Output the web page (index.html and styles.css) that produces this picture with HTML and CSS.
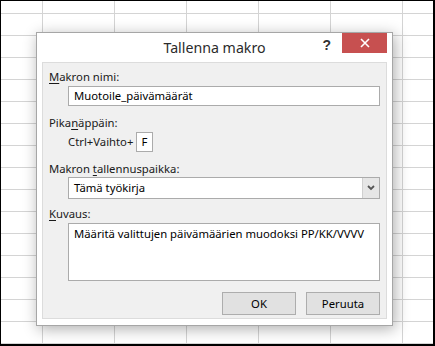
FILE: index.html
```html
<!DOCTYPE html>
<html lang="fi">
<head>
  <meta charset="UTF-8">
  <title>Tallenna makro</title>
  <link rel="stylesheet" href="styles.css">
</head>
<body>
  <div class="sheet">
    <div class="dialog">
      <div class="title-bar">
        <span></span>
        <h1 class="title">Tallenna makro</h1>
        <div class="controls">
          <span class="help">?</span>
          <button type="button" class="btn-close">
            <svg width="10" height="10" viewBox="0 0 10 10"><path d="M1 1 L9 9 M9 1 L1 9" stroke="#fff" stroke-width="1.6"/></svg>
          </button>
        </div>
      </div>
      <div class="panel">
        <label class="lab"><u>M</u>akron nimi:</label>
        <div class="field name-field">Muotoile_päivämäärät</div>

        <label class="lab lab-gap">Pika<u>n</u>äppäin:</label>
        <div class="key-row">
          <span class="key-txt">Ctrl+Vaihto+</span>
          <span class="key-box">F</span>
        </div>

        <label class="lab lab-gap">Makron <u>t</u>allennuspaikka:</label>
        <div class="field select-field">
          <span class="select-txt">Tämä työkirja</span>
          <span class="select-arrow">
            <svg width="8" height="6" viewBox="0 0 8 6"><path d="M1 1 L4 4 L7 1" fill="none" stroke="#555" stroke-width="1.8"/></svg>
          </span>
        </div>

        <label class="lab lab-gap2"><u>K</u>uvaus:</label>
        <div class="field desc-field">Määritä valittujen päivämäärien muodoksi PP/KK/VVVV</div>

        <div class="btn-row">
          <button type="button" class="btn-g">OK</button>
          <button type="button" class="btn-g">Peruuta</button>
        </div>
      </div>
    </div>
  </div>
</body>
</html>
```

FILE: styles.css
```css
/* reset */
* {
  margin: 0;
  padding: 0;
  box-sizing: border-box;
}
html, body {
  width: 435px;
  height: 346px;
  overflow: hidden;
}
body {
  font-family: "Noto Sans", "Open Sans", sans-serif;
  font-size: 11.3px;
  color: #1a1a1a;
}

/* spreadsheet behind the dialog */
.sheet {
  width: 435px;
  height: 346px;
  border-style: solid;
  border-color: #000;
  border-width: 1px 2px 2px 1px;
  background-color: #fff;
  background-image:
    linear-gradient(to right, transparent 71px, #d4d4d4 71px),
    linear-gradient(to bottom, transparent 21px, #d4d4d4 21px);
  background-size: 72px 100%, 100% 22px;
  background-position: -30px 0, 0 -9px;
  padding: 31px 0 0 35px;
}

/* dialog window */
.dialog {
  width: 357px;
  height: 294px;
  background: #fff;
  border: 1px solid #a6a6a6;
  box-shadow: 2px 3px 14px rgba(0,0,0,0.32);
  padding: 0 5px 6px;
  display: flex;
  flex-direction: column;
}
.title-bar {
  height: 29px;
  display: grid;
  grid-template-columns: 1fr auto 1fr;
  align-items: start;
}
.title {
  font-family: "Noto Sans", "Open Sans", sans-serif;
  font-weight: normal;
  font-size: 14.2px;
  color: #2b2b2b;
  line-height: 20px;
  padding-top: 5px;
}
.controls {
  display: flex;
  justify-content: flex-end;
  align-items: flex-start;
}
.help {
  font-family: "Liberation Sans", sans-serif;
  font-weight: bold;
  font-size: 14px;
  color: #333;
  line-height: 14px;
  margin: 5px 11px 0 0;
}
.btn-close {
  width: 45px;
  height: 20px;
  background: #c75050;
  border: 0;
  display: flex;
  align-items: center;
  justify-content: center;
}

/* grey content panel */
.panel {
  flex: 1;
  background: #f0f0f0;
  border: 1px solid #dcdcdc;
  padding: 6px 6px 0 6px;
  display: flex;
  flex-direction: column;
}
.lab {
  display: block;
  line-height: 16px;
}
.lab u {
  text-decoration-thickness: 1px;
  text-underline-offset: 2px;
}
.lab-gap {
  margin-top: 9px;
}
.lab-gap2 {
  margin-top: 7px;
}
.field {
  margin-left: 19px;
  background: #fff;
  border: 1px solid #ababab;
  color: #000;
}
.name-field {
  margin-top: 1px;
  height: 20px;
  line-height: 18px;
  padding-left: 5px;
}

.key-row {
  margin: 1px 0 0 19px;
  display: flex;
  align-items: center;
  gap: 3px;
}
.key-txt {
  line-height: 20px;
}
.key-box {
  width: 17px;
  height: 20px;
  background: #fff;
  border: 1px solid #ababab;
  line-height: 18px;
  padding-left: 4px;
  color: #000;
}

.select-field {
  height: 22px;
  display: flex;
}
.select-txt {
  flex: 1;
  line-height: 20px;
  padding-left: 5px;
}
.select-arrow {
  width: 17px;
  background: #e6e6e6;
  border-left: 1px solid #d0d0d0;
  display: flex;
  align-items: center;
  justify-content: center;
}

.desc-field {
  margin-top: 1px;
  height: 58px;
  padding: 2px 5px;
  line-height: 16px;
}

.btn-row {
  margin-top: 11px;
  display: flex;
  justify-content: flex-end;
  gap: 10px;
}
.btn-g {
  width: 74px;
  height: 23px;
  background: #e1e1e1;
  border: 1px solid #adadad;
  font-family: "Noto Sans", "Open Sans", sans-serif;
  font-size: 11.3px;
  color: #000;
}
```
